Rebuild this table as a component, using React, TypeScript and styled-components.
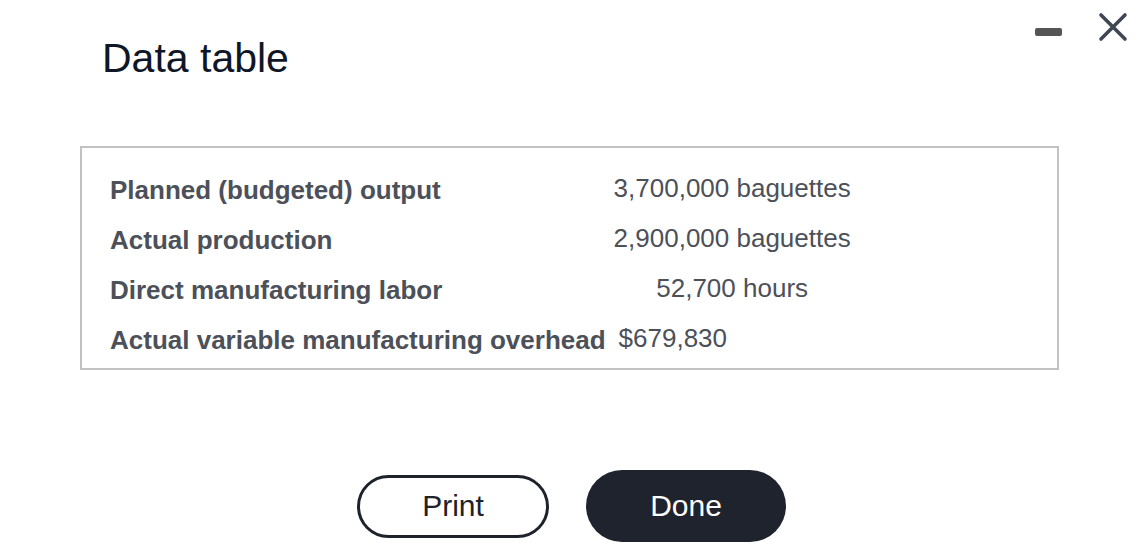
import React from 'react';
import styled, { createGlobalStyle } from 'styled-components';

const GlobalStyle = createGlobalStyle`
  html, body {
    margin: 0;
    padding: 0;
    background: #ffffff;
  }
  body {
    font-family: 'Liberation Sans', Arial, Helvetica, sans-serif;
  }
`;

interface DataRow {
  label: string;
  value: string;
  align: 'center' | 'left';
}

const rows: DataRow[] = [
  { label: 'Planned (budgeted) output', value: '3,700,000 baguettes', align: 'center' },
  { label: 'Actual production', value: '2,900,000 baguettes', align: 'center' },
  { label: 'Direct manufacturing labor', value: '52,700 hours', align: 'center' },
  { label: 'Actual variable manufacturing overhead', value: '$679,830', align: 'left' },
];

const App = () => {
  return (
    <>
      <GlobalStyle />
      <Dialog>
        <Header>
          <Title>Data table</Title>
          <WindowControls>
            <MinimizeButton aria-label="Minimize">
              <span />
            </MinimizeButton>
            <CloseButton aria-label="Close">
              <svg width="30" height="30" viewBox="0 0 30 30">
                <path d="M3 3 L27 27 M27 3 L3 27" stroke="#3f4755" strokeWidth="3.6" strokeLinecap="round" fill="none" />
              </svg>
            </CloseButton>
          </WindowControls>
        </Header>

        <TableBox>
          <DataGrid>
            {rows.map(row => (
              <React.Fragment key={row.label}>
                <Label>{row.label}</Label>
                <Value $align={row.align}>{row.value}</Value>
              </React.Fragment>
            ))}
          </DataGrid>
        </TableBox>

        <Actions>
          <PrintButton>Print</PrintButton>
          <DoneButton>Done</DoneButton>
        </Actions>
      </Dialog>
    </>
  );
};

const Dialog = styled.div`
  width: 1148px;
  height: 554px;
  display: flex;
  flex-direction: column;
  box-sizing: border-box;
`;

const Header = styled.div`
  display: flex;
  justify-content: space-between;
  align-items: flex-start;
  height: 146px;
  padding-left: 102px;
  padding-right: 20px;
  box-sizing: border-box;
`;

const Title = styled.h1`
  margin: 38px 0 0;
  font-size: 41px;
  line-height: 40px;
  font-weight: 400;
  color: #0e1628;
`;

const WindowControls = styled.div`
  display: flex;
  align-items: flex-start;
  gap: 36px;
  padding-top: 12px;
`;

const MinimizeButton = styled.button`
  border: none;
  background: none;
  padding: 0;
  margin-top: 16px;
  cursor: pointer;

  span {
    display: block;
    width: 27px;
    height: 8px;
    border-radius: 2px;
    background: #555555;
  }
`;

const CloseButton = styled.button`
  border: none;
  background: none;
  padding: 0;
  width: 30px;
  height: 30px;
  cursor: pointer;

  svg {
    display: block;
  }
`;

const TableBox = styled.div`
  margin-left: 80px;
  width: 979px;
  height: 224px;
  border: 2px solid #c2c2c2;
  box-sizing: border-box;
  padding: 27px 0 0 28px;
`;

const DataGrid = styled.div`
  display: grid;
  grid-template-columns: max-content max-content;
  column-gap: 8px;
  row-gap: 20px;
`;

const Label = styled.div`
  font-size: 26px;
  line-height: 30px;
  font-weight: 700;
  color: #4c5059;
`;

const Value = styled.div<{ $align: 'center' | 'left' }>`
  align-self: start;
  font-size: 26px;
  line-height: 26px;
  font-weight: 400;
  color: #4c5059;
  text-align: ${({ $align }) => $align};
  padding-left: ${({ $align }) => ($align === 'left' ? '5px' : '0')};
`;

const Actions = styled.div`
  display: flex;
  justify-content: center;
  align-items: center;
  gap: 37px;
  margin-top: 100px;
  padding-right: 5px;
`;

const PillButton = styled.button`
  font-family: 'Liberation Sans', Arial, Helvetica, sans-serif;
  font-size: 30px;
  border-radius: 999px;
  box-sizing: border-box;
  cursor: pointer;
`;

const PrintButton = styled(PillButton)`
  width: 192px;
  height: 63px;
  background: #ffffff;
  color: #1e222b;
  border: 3px solid #1e222b;
`;

const DoneButton = styled(PillButton)`
  width: 200px;
  height: 72px;
  background: #1f232d;
  color: #ffffff;
  border: none;
`;

export default App;
